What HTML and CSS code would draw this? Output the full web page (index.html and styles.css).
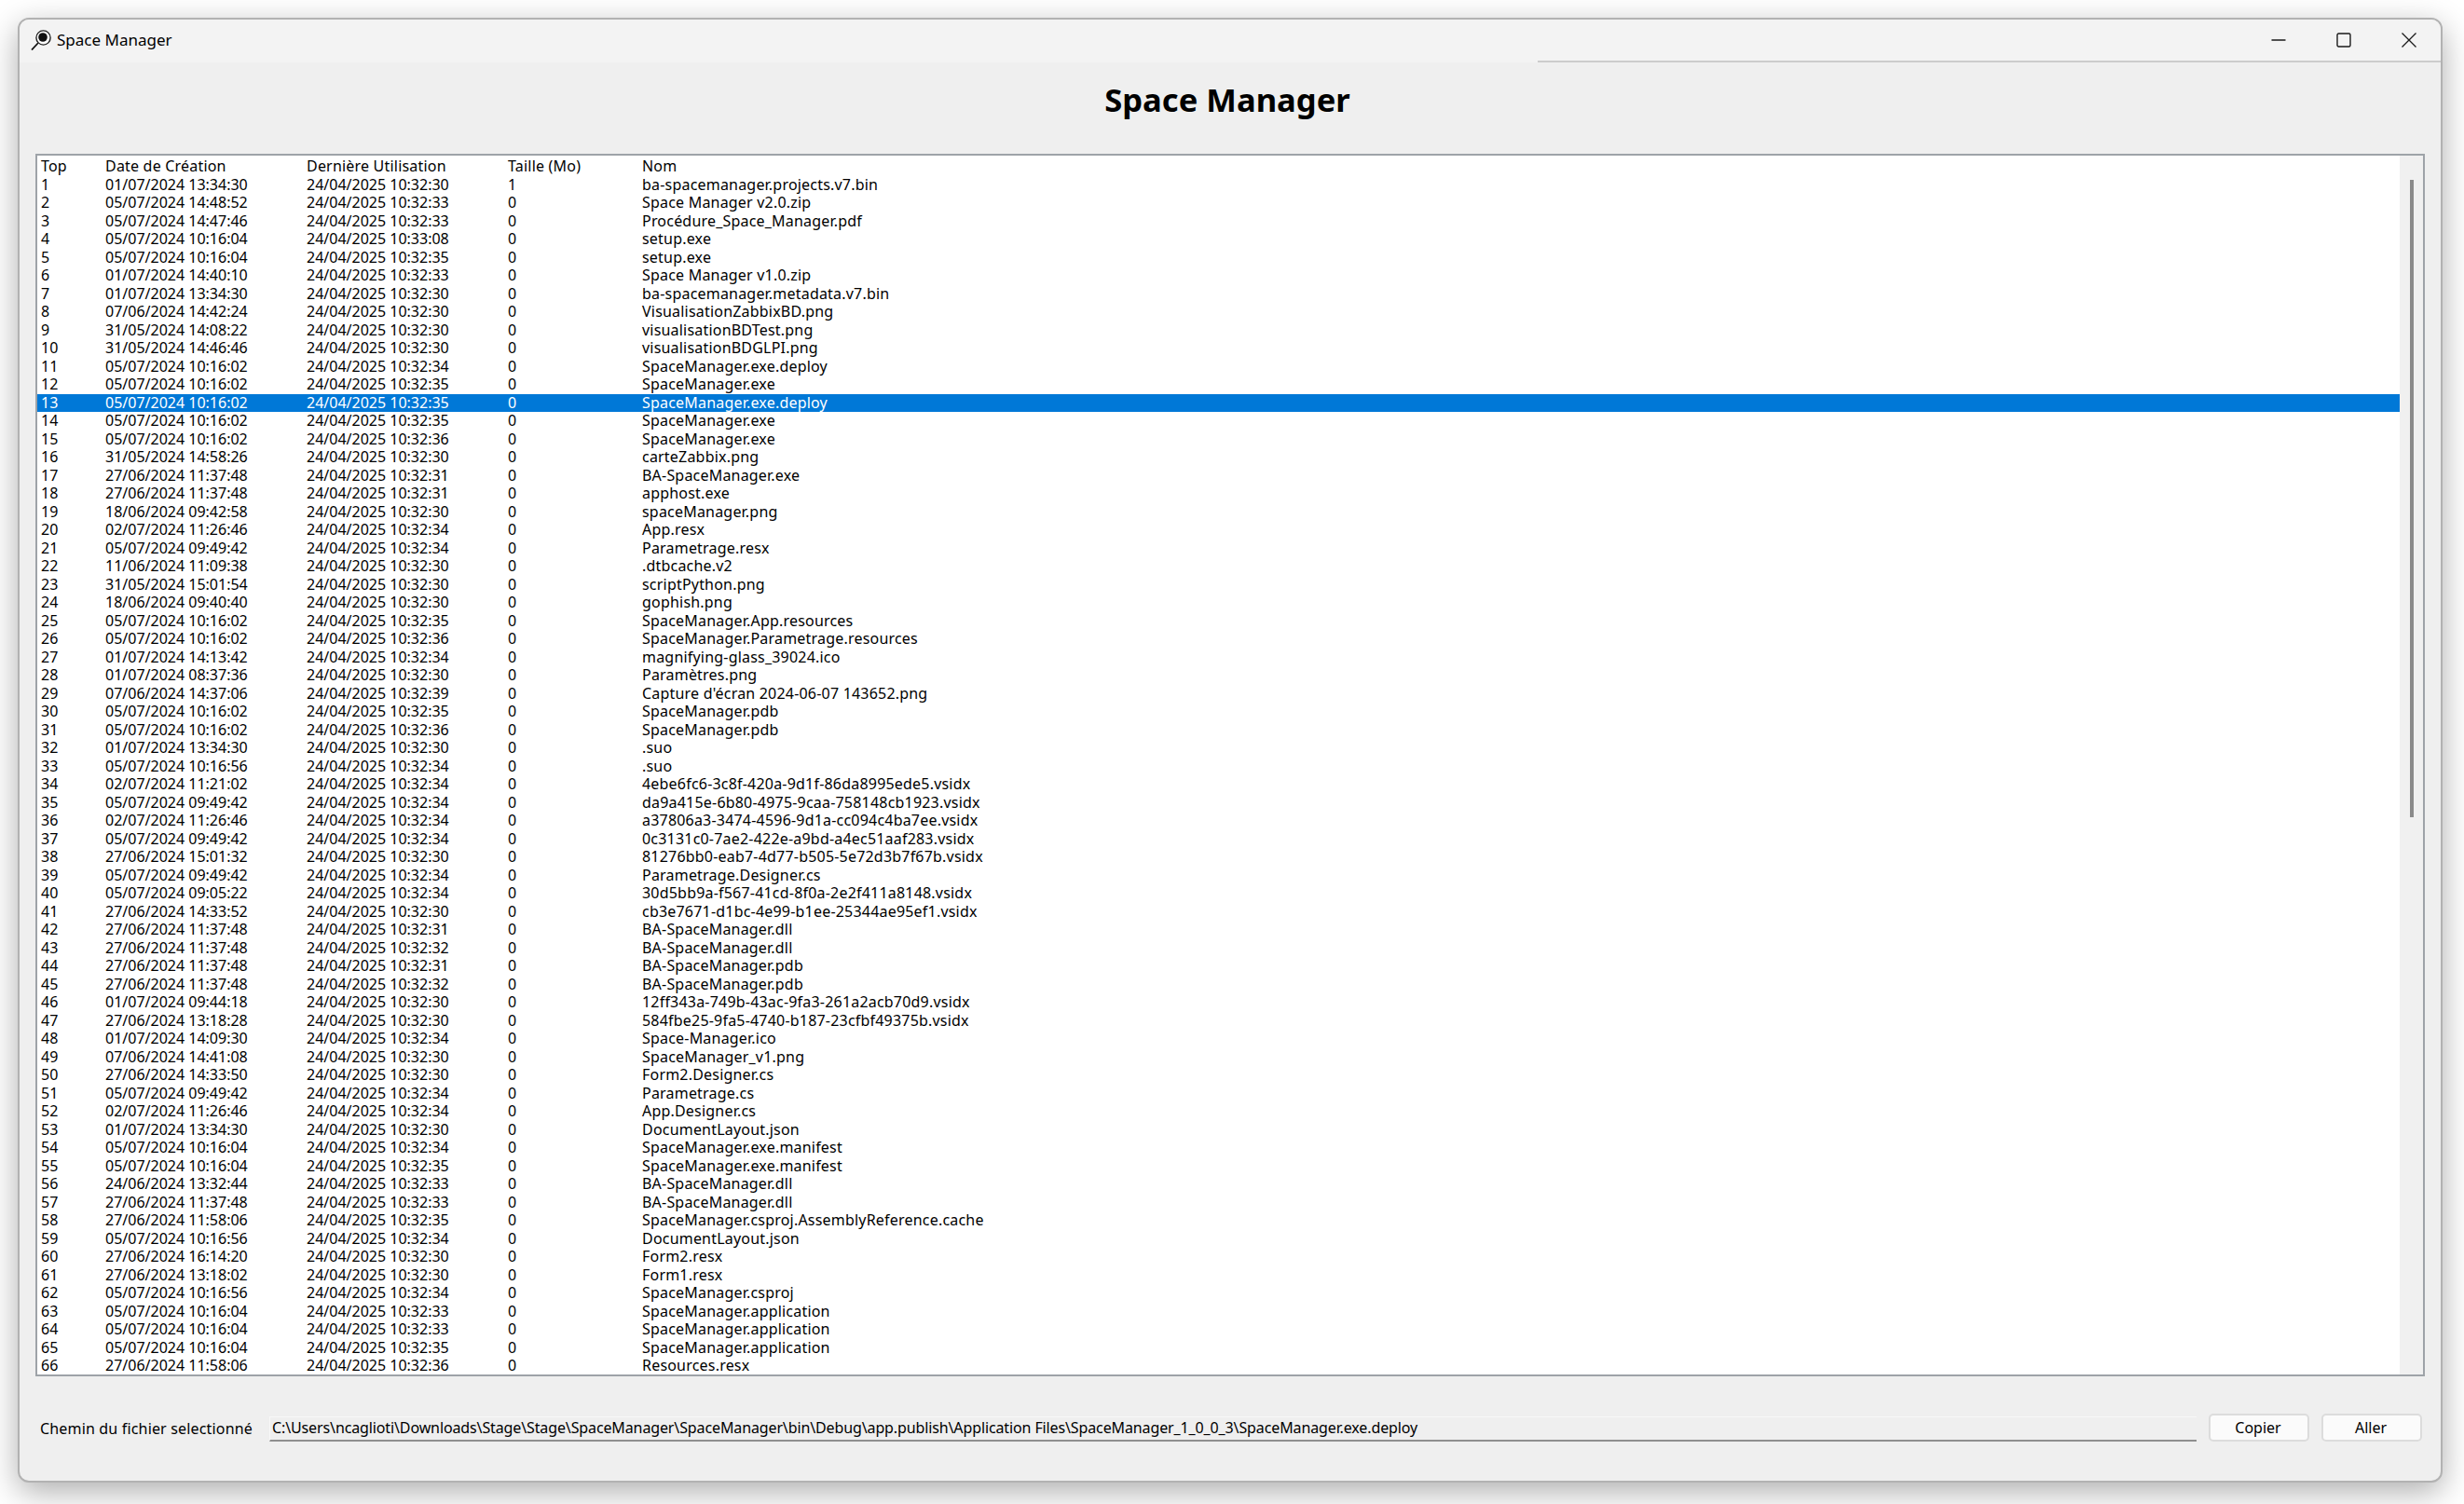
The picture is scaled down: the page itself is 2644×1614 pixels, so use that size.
FILE: index.html
```html
<!DOCTYPE html>
<html lang="fr">
<head>
    <meta charset="UTF-8">
    <title>Space Manager</title>
    <link rel="stylesheet" href="styles.css">
</head>
<body>
    <div class="window">
        <div class="titlebar">
            <svg class="app-icon" viewBox="0 0 22 22">
                <line x1="1" y1="21.5" x2="8" y2="14" stroke="#111" stroke-width="1.8"/>
                <circle cx="13.5" cy="8.5" r="7.6" fill="#fff" stroke="#222" stroke-width="1.4"/>
                <circle cx="13" cy="8" r="4.8" fill="#111"/>
            </svg>
            <span class="window-name">Space Manager</span>
            <div class="caption-buttons">
                <svg class="caption-btn" viewBox="0 0 16 16"><line x1="0.5" y1="8" x2="15.5" y2="8" stroke="#1a1a1a" stroke-width="1.3"/></svg>
                <svg class="caption-btn" viewBox="0 0 16 16"><rect x="1" y="1" width="14" height="14" rx="1.5" fill="none" stroke="#1a1a1a" stroke-width="1.4"/></svg>
                <svg class="caption-btn" viewBox="0 0 16 16"><path d="M0.5 0.5L15.5 15.5M15.5 0.5L0.5 15.5" fill="none" stroke="#1a1a1a" stroke-width="1.3"/></svg>
            </div>
        </div>

        <h1 class="app-title">Space Manager</h1>

        <div class="file-list">
            <div class="rows">
                <div class="row header"><span>Top</span><span>Date de Création</span><span>Dernière Utilisation</span><span>Taille (Mo)</span><span>Nom</span></div>
                <div class="row"><span>1</span><span>01/07/2024 13:34:30</span><span>24/04/2025 10:32:30</span><span>1</span><span>ba-spacemanager.projects.v7.bin</span></div>
                <div class="row"><span>2</span><span>05/07/2024 14:48:52</span><span>24/04/2025 10:32:33</span><span>0</span><span>Space Manager v2.0.zip</span></div>
                <div class="row"><span>3</span><span>05/07/2024 14:47:46</span><span>24/04/2025 10:32:33</span><span>0</span><span>Procédure_Space_Manager.pdf</span></div>
                <div class="row"><span>4</span><span>05/07/2024 10:16:04</span><span>24/04/2025 10:33:08</span><span>0</span><span>setup.exe</span></div>
                <div class="row"><span>5</span><span>05/07/2024 10:16:04</span><span>24/04/2025 10:32:35</span><span>0</span><span>setup.exe</span></div>
                <div class="row"><span>6</span><span>01/07/2024 14:40:10</span><span>24/04/2025 10:32:33</span><span>0</span><span>Space Manager v1.0.zip</span></div>
                <div class="row"><span>7</span><span>01/07/2024 13:34:30</span><span>24/04/2025 10:32:30</span><span>0</span><span>ba-spacemanager.metadata.v7.bin</span></div>
                <div class="row"><span>8</span><span>07/06/2024 14:42:24</span><span>24/04/2025 10:32:30</span><span>0</span><span>VisualisationZabbixBD.png</span></div>
                <div class="row"><span>9</span><span>31/05/2024 14:08:22</span><span>24/04/2025 10:32:30</span><span>0</span><span>visualisationBDTest.png</span></div>
                <div class="row"><span>10</span><span>31/05/2024 14:46:46</span><span>24/04/2025 10:32:30</span><span>0</span><span>visualisationBDGLPI.png</span></div>
                <div class="row"><span>11</span><span>05/07/2024 10:16:02</span><span>24/04/2025 10:32:34</span><span>0</span><span>SpaceManager.exe.deploy</span></div>
                <div class="row"><span>12</span><span>05/07/2024 10:16:02</span><span>24/04/2025 10:32:35</span><span>0</span><span>SpaceManager.exe</span></div>
                <div class="row selected"><span>13</span><span>05/07/2024 10:16:02</span><span>24/04/2025 10:32:35</span><span>0</span><span>SpaceManager.exe.deploy</span></div>
                <div class="row"><span>14</span><span>05/07/2024 10:16:02</span><span>24/04/2025 10:32:35</span><span>0</span><span>SpaceManager.exe</span></div>
                <div class="row"><span>15</span><span>05/07/2024 10:16:02</span><span>24/04/2025 10:32:36</span><span>0</span><span>SpaceManager.exe</span></div>
                <div class="row"><span>16</span><span>31/05/2024 14:58:26</span><span>24/04/2025 10:32:30</span><span>0</span><span>carteZabbix.png</span></div>
                <div class="row"><span>17</span><span>27/06/2024 11:37:48</span><span>24/04/2025 10:32:31</span><span>0</span><span>BA-SpaceManager.exe</span></div>
                <div class="row"><span>18</span><span>27/06/2024 11:37:48</span><span>24/04/2025 10:32:31</span><span>0</span><span>apphost.exe</span></div>
                <div class="row"><span>19</span><span>18/06/2024 09:42:58</span><span>24/04/2025 10:32:30</span><span>0</span><span>spaceManager.png</span></div>
                <div class="row"><span>20</span><span>02/07/2024 11:26:46</span><span>24/04/2025 10:32:34</span><span>0</span><span>App.resx</span></div>
                <div class="row"><span>21</span><span>05/07/2024 09:49:42</span><span>24/04/2025 10:32:34</span><span>0</span><span>Parametrage.resx</span></div>
                <div class="row"><span>22</span><span>11/06/2024 11:09:38</span><span>24/04/2025 10:32:30</span><span>0</span><span>.dtbcache.v2</span></div>
                <div class="row"><span>23</span><span>31/05/2024 15:01:54</span><span>24/04/2025 10:32:30</span><span>0</span><span>scriptPython.png</span></div>
                <div class="row"><span>24</span><span>18/06/2024 09:40:40</span><span>24/04/2025 10:32:30</span><span>0</span><span>gophish.png</span></div>
                <div class="row"><span>25</span><span>05/07/2024 10:16:02</span><span>24/04/2025 10:32:35</span><span>0</span><span>SpaceManager.App.resources</span></div>
                <div class="row"><span>26</span><span>05/07/2024 10:16:02</span><span>24/04/2025 10:32:36</span><span>0</span><span>SpaceManager.Parametrage.resources</span></div>
                <div class="row"><span>27</span><span>01/07/2024 14:13:42</span><span>24/04/2025 10:32:34</span><span>0</span><span>magnifying-glass_39024.ico</span></div>
                <div class="row"><span>28</span><span>01/07/2024 08:37:36</span><span>24/04/2025 10:32:30</span><span>0</span><span>Paramètres.png</span></div>
                <div class="row"><span>29</span><span>07/06/2024 14:37:06</span><span>24/04/2025 10:32:39</span><span>0</span><span>Capture d'écran 2024-06-07 143652.png</span></div>
                <div class="row"><span>30</span><span>05/07/2024 10:16:02</span><span>24/04/2025 10:32:35</span><span>0</span><span>SpaceManager.pdb</span></div>
                <div class="row"><span>31</span><span>05/07/2024 10:16:02</span><span>24/04/2025 10:32:36</span><span>0</span><span>SpaceManager.pdb</span></div>
                <div class="row"><span>32</span><span>01/07/2024 13:34:30</span><span>24/04/2025 10:32:30</span><span>0</span><span>.suo</span></div>
                <div class="row"><span>33</span><span>05/07/2024 10:16:56</span><span>24/04/2025 10:32:34</span><span>0</span><span>.suo</span></div>
                <div class="row"><span>34</span><span>02/07/2024 11:21:02</span><span>24/04/2025 10:32:34</span><span>0</span><span>4ebe6fc6-3c8f-420a-9d1f-86da8995ede5.vsidx</span></div>
                <div class="row"><span>35</span><span>05/07/2024 09:49:42</span><span>24/04/2025 10:32:34</span><span>0</span><span>da9a415e-6b80-4975-9caa-758148cb1923.vsidx</span></div>
                <div class="row"><span>36</span><span>02/07/2024 11:26:46</span><span>24/04/2025 10:32:34</span><span>0</span><span>a37806a3-3474-4596-9d1a-cc094c4ba7ee.vsidx</span></div>
                <div class="row"><span>37</span><span>05/07/2024 09:49:42</span><span>24/04/2025 10:32:34</span><span>0</span><span>0c3131c0-7ae2-422e-a9bd-a4ec51aaf283.vsidx</span></div>
                <div class="row"><span>38</span><span>27/06/2024 15:01:32</span><span>24/04/2025 10:32:30</span><span>0</span><span>81276bb0-eab7-4d77-b505-5e72d3b7f67b.vsidx</span></div>
                <div class="row"><span>39</span><span>05/07/2024 09:49:42</span><span>24/04/2025 10:32:34</span><span>0</span><span>Parametrage.Designer.cs</span></div>
                <div class="row"><span>40</span><span>05/07/2024 09:05:22</span><span>24/04/2025 10:32:34</span><span>0</span><span>30d5bb9a-f567-41cd-8f0a-2e2f411a8148.vsidx</span></div>
                <div class="row"><span>41</span><span>27/06/2024 14:33:52</span><span>24/04/2025 10:32:30</span><span>0</span><span>cb3e7671-d1bc-4e99-b1ee-25344ae95ef1.vsidx</span></div>
                <div class="row"><span>42</span><span>27/06/2024 11:37:48</span><span>24/04/2025 10:32:31</span><span>0</span><span>BA-SpaceManager.dll</span></div>
                <div class="row"><span>43</span><span>27/06/2024 11:37:48</span><span>24/04/2025 10:32:32</span><span>0</span><span>BA-SpaceManager.dll</span></div>
                <div class="row"><span>44</span><span>27/06/2024 11:37:48</span><span>24/04/2025 10:32:31</span><span>0</span><span>BA-SpaceManager.pdb</span></div>
                <div class="row"><span>45</span><span>27/06/2024 11:37:48</span><span>24/04/2025 10:32:32</span><span>0</span><span>BA-SpaceManager.pdb</span></div>
                <div class="row"><span>46</span><span>01/07/2024 09:44:18</span><span>24/04/2025 10:32:30</span><span>0</span><span>12ff343a-749b-43ac-9fa3-261a2acb70d9.vsidx</span></div>
                <div class="row"><span>47</span><span>27/06/2024 13:18:28</span><span>24/04/2025 10:32:30</span><span>0</span><span>584fbe25-9fa5-4740-b187-23cfbf49375b.vsidx</span></div>
                <div class="row"><span>48</span><span>01/07/2024 14:09:30</span><span>24/04/2025 10:32:34</span><span>0</span><span>Space-Manager.ico</span></div>
                <div class="row"><span>49</span><span>07/06/2024 14:41:08</span><span>24/04/2025 10:32:30</span><span>0</span><span>SpaceManager_v1.png</span></div>
                <div class="row"><span>50</span><span>27/06/2024 14:33:50</span><span>24/04/2025 10:32:30</span><span>0</span><span>Form2.Designer.cs</span></div>
                <div class="row"><span>51</span><span>05/07/2024 09:49:42</span><span>24/04/2025 10:32:34</span><span>0</span><span>Parametrage.cs</span></div>
                <div class="row"><span>52</span><span>02/07/2024 11:26:46</span><span>24/04/2025 10:32:34</span><span>0</span><span>App.Designer.cs</span></div>
                <div class="row"><span>53</span><span>01/07/2024 13:34:30</span><span>24/04/2025 10:32:30</span><span>0</span><span>DocumentLayout.json</span></div>
                <div class="row"><span>54</span><span>05/07/2024 10:16:04</span><span>24/04/2025 10:32:34</span><span>0</span><span>SpaceManager.exe.manifest</span></div>
                <div class="row"><span>55</span><span>05/07/2024 10:16:04</span><span>24/04/2025 10:32:35</span><span>0</span><span>SpaceManager.exe.manifest</span></div>
                <div class="row"><span>56</span><span>24/06/2024 13:32:44</span><span>24/04/2025 10:32:33</span><span>0</span><span>BA-SpaceManager.dll</span></div>
                <div class="row"><span>57</span><span>27/06/2024 11:37:48</span><span>24/04/2025 10:32:33</span><span>0</span><span>BA-SpaceManager.dll</span></div>
                <div class="row"><span>58</span><span>27/06/2024 11:58:06</span><span>24/04/2025 10:32:35</span><span>0</span><span>SpaceManager.csproj.AssemblyReference.cache</span></div>
                <div class="row"><span>59</span><span>05/07/2024 10:16:56</span><span>24/04/2025 10:32:34</span><span>0</span><span>DocumentLayout.json</span></div>
                <div class="row"><span>60</span><span>27/06/2024 16:14:20</span><span>24/04/2025 10:32:30</span><span>0</span><span>Form2.resx</span></div>
                <div class="row"><span>61</span><span>27/06/2024 13:18:02</span><span>24/04/2025 10:32:30</span><span>0</span><span>Form1.resx</span></div>
                <div class="row"><span>62</span><span>05/07/2024 10:16:56</span><span>24/04/2025 10:32:34</span><span>0</span><span>SpaceManager.csproj</span></div>
                <div class="row"><span>63</span><span>05/07/2024 10:16:04</span><span>24/04/2025 10:32:33</span><span>0</span><span>SpaceManager.application</span></div>
                <div class="row"><span>64</span><span>05/07/2024 10:16:04</span><span>24/04/2025 10:32:33</span><span>0</span><span>SpaceManager.application</span></div>
                <div class="row"><span>65</span><span>05/07/2024 10:16:04</span><span>24/04/2025 10:32:35</span><span>0</span><span>SpaceManager.application</span></div>
                <div class="row"><span>66</span><span>27/06/2024 11:58:06</span><span>24/04/2025 10:32:36</span><span>0</span><span>Resources.resx</span></div>
            </div>
            <div class="scrollbar"><div class="scroll-thumb"></div></div>
        </div>

        <div class="path-bar">
            <span class="path-label">Chemin du fichier selectionné</span>
            <div class="path-box">C:\Users\ncaglioti\Downloads\Stage\Stage\SpaceManager\SpaceManager\bin\Debug\app.publish\Application Files\SpaceManager_1_0_0_3\SpaceManager.exe.deploy</div>
            <button class="btn" type="button">Copier</button>
            <button class="btn" type="button">Aller</button>
        </div>
    </div>
</body>
</html>
```

FILE: styles.css
```css
html, body {
    height: 100%;
}
body {
    margin: 0;
    padding: 19px 23px 23px 19px;
    box-sizing: border-box;
    background: #fff;
    font-family: "Noto Sans", sans-serif;
    font-size: 16px;
    color: #000;
    overflow: hidden;
}
.window {
    height: 100%;
    box-sizing: border-box;
    display: flex;
    flex-direction: column;
    background: #efefef;
    border: 2px solid #b2b2b2;
    border-radius: 12px;
    box-shadow: 0 10px 34px rgba(0, 0, 0, 0.32);
    overflow: hidden;
}
.titlebar {
    height: 46px;
    flex: none;
    box-sizing: border-box;
    display: flex;
    align-items: center;
    padding: 0 0 3px 12px;
    background: linear-gradient(#cccccc, #cccccc) no-repeat right bottom / 969px 2px, #f3f3f3;
}
.app-icon {
    width: 22px;
    height: 22px;
    margin-right: 6px;
}
.window-name {
    font-size: 17px;
}
.caption-buttons {
    margin-left: auto;
    display: flex;
    gap: 54px;
    padding-right: 26px;
}
.caption-btn {
    width: 16px;
    height: 16px;
}
.app-title {
    margin: 0;
    height: 98px;
    flex: none;
    box-sizing: border-box;
    padding: 16px 6px 0 0;
    text-align: center;
    font-size: 34.6px;
    line-height: 48px;
    font-weight: 700;
}
.file-list {
    flex: none;
    height: 1312px;
    margin: 0 17px;
    box-sizing: border-box;
    border: 2px solid #9ea3a8;
    background: #fff;
    display: flex;
    overflow: hidden;
}
.rows {
    flex: 1;
    padding-top: 2px;
    overflow: hidden;
}
.row {
    display: grid;
    grid-template-columns: 69px 216px 216px 144px 1fr;
    height: 19.5px;
    line-height: 19.5px;
    white-space: nowrap;
}
.row span {
    padding-left: 4px;
}
.row span:last-child {
    letter-spacing: 0.2px;
}
.header span {
    letter-spacing: 0.2px;
}
.selected {
    background: #0078d7;
    color: #fff;
}
.scrollbar {
    flex: none;
    width: 25px;
    background: #f0f0f0;
    padding-top: 26px;
}
.scroll-thumb {
    width: 4px;
    height: 684px;
    margin: 0 auto;
    background: #8a8a8a;
}
.path-bar {
    flex: 1;
    display: flex;
    align-items: flex-start;
    padding: 40px 20px 0 22px;
}
.path-label {
    width: 246px;
    flex: none;
    margin-top: 5px;
    line-height: 22px;
    letter-spacing: 0.17px;
}
.path-box {
    flex: 1;
    height: 27px;
    margin-top: 3px;
    box-sizing: border-box;
    padding-left: 2px;
    border-top: 1px solid #f8f8f8;
    border-left: 1px solid #f8f8f8;
    border-bottom: 2px solid #8f8f8f;
    background: #efefef;
    font-size: 16px;
    letter-spacing: -0.12px;
    line-height: 23px;
    white-space: nowrap;
}
.btn {
    width: 108px;
    height: 30px;
    margin-left: 13px;
    padding: 0 2px 0 0;
    border: 2px solid #dcdcdc;
    border-radius: 5px;
    background: #fbfbfb;
    font-family: inherit;
    font-size: 16px;
    color: #000;
}
```
